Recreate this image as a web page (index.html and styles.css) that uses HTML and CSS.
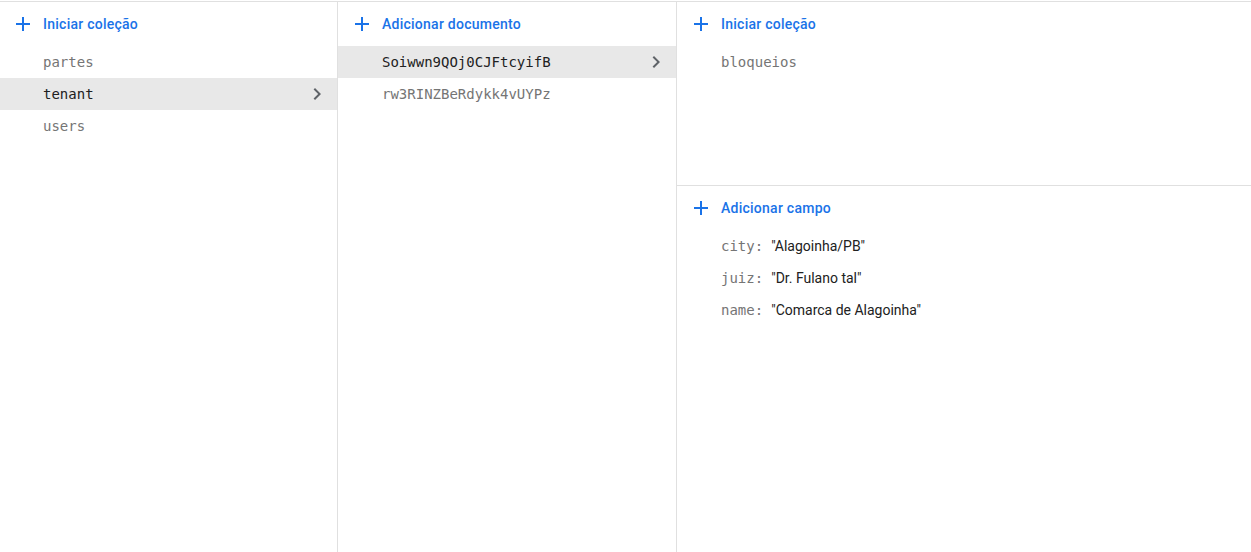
FILE: index.html
```html
<!DOCTYPE html>
<html lang="pt">
<head>
<meta charset="utf-8">
<title>Firestore</title>
<link rel="stylesheet" href="styles.css">
</head>
<body>
<div class="panels">
  <section class="col col-a">
    <div class="action"><svg class="plus" viewBox="0 0 24 24"><path d="M19 13h-6v6h-2v-6H5v-2h6V5h2v6h6v2z"/></svg><span>Iniciar coleção</span></div>
    <div class="item">partes</div>
    <div class="item selected">tenant<svg class="chev" viewBox="0 0 24 24"><path d="M10 6L8.59 7.41 13.17 12l-4.58 4.59L10 18l6-6z"/></svg></div>
    <div class="item">users</div>
  </section>
  <section class="col col-b">
    <div class="action"><svg class="plus" viewBox="0 0 24 24"><path d="M19 13h-6v6h-2v-6H5v-2h6V5h2v6h6v2z"/></svg><span>Adicionar documento</span></div>
    <div class="item selected">Soiwwn9QOj0CJFtcyifB<svg class="chev" viewBox="0 0 24 24"><path d="M10 6L8.59 7.41 13.17 12l-4.58 4.59L10 18l6-6z"/></svg></div>
    <div class="item">rw3RINZBeRdykk4vUYPz</div>
  </section>
  <section class="col col-c">
    <div class="subcols">
      <div class="action"><svg class="plus" viewBox="0 0 24 24"><path d="M19 13h-6v6h-2v-6H5v-2h6V5h2v6h6v2z"/></svg><span>Iniciar coleção</span></div>
      <div class="item">bloqueios</div>
    </div>
    <div class="fields">
      <div class="action action-field"><svg class="plus" viewBox="0 0 24 24"><path d="M19 13h-6v6h-2v-6H5v-2h6V5h2v6h6v2z"/></svg><span>Adicionar campo</span></div>
      <div class="field"><span class="key">city:</span><span class="val">"Alagoinha/PB"</span></div>
      <div class="field"><span class="key">juiz:</span><span class="val">"Dr. Fulano tal"</span></div>
      <div class="field"><span class="key">name:</span><span class="val">"Comarca de Alagoinha"</span></div>
    </div>
  </section>
</div>
</body>
</html>
```

FILE: styles.css
```css
* { box-sizing: border-box; }
html, body { margin: 0; height: 100%; background: #fff; }
body {
  padding-top: 1px;
  font-family: Roboto, "Liberation Sans", sans-serif;
  font-size: 14px;
  overflow: hidden;
}
.panels {
  display: flex;
  height: 551px;
  margin-left: -2px;
  border-top: 1px solid #e0e0e0;
}
.col {
  border-left: 1px solid #e0e0e0;
  display: flex;
  flex-direction: column;
}
.col-a { width: 339px; }
.col-b { width: 339px; }
.col-c { flex: 1; }
.action {
  height: 44px;
  display: flex;
  align-items: center;
  padding-left: 12px;
  color: #1a73e8;
  font-weight: 500;
  font-size: 14px;
  letter-spacing: 0.25px;
}
.plus {
  width: 24px;
  height: 24px;
  fill: #1a73e8;
  margin-right: 8px;
  flex: none;
}
.item {
  height: 32px;
  display: flex;
  align-items: center;
  justify-content: space-between;
  padding-left: 44px;
  padding-right: 8px;
  font-family: "DejaVu Sans Mono", "Liberation Mono", monospace;
  font-size: 14px;
  color: #757575;
}
.item.selected {
  background: #e8e8e8;
  color: #212121;
}
.chev {
  width: 24px;
  height: 24px;
  fill: #5f6368;
  flex: none;
}
.subcols {
  height: 184px;
  border-bottom: 1px solid #e0e0e0;
  flex: none;
}
.field {
  height: 32px;
  display: flex;
  align-items: center;
  padding-left: 44px;
}
.key {
  font-family: "DejaVu Sans Mono", "Liberation Mono", monospace;
  color: #757575;
  margin-right: 8px;
}
.val {
  color: #212121;
}
```
